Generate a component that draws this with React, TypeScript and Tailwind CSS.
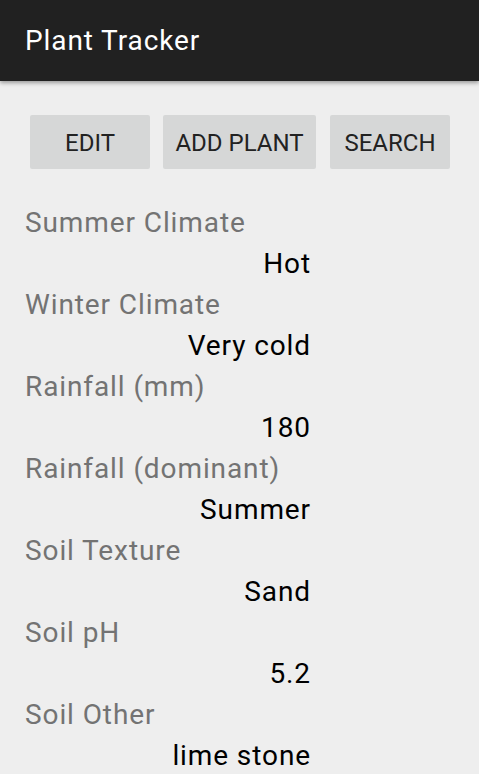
import React from "react";

const rows: { label: string; value: string }[] = [
  { label: "Summer Climate", value: "Hot" },
  { label: "Winter Climate", value: "Very cold" },
  { label: "Rainfall (mm)", value: "180" },
  { label: "Rainfall (dominant)", value: "Summer" },
  { label: "Soil Texture", value: "Sand" },
  { label: "Soil pH", value: "5.2" },
  { label: "Soil Other", value: "lime stone" },
];

export default function App() {
  return (
    <div className="w-[479px] h-[774px] overflow-hidden bg-[#eeeeee] font-['Roboto',sans-serif]">
      {/* action bar */}
      <div className="relative z-10 h-[81px] bg-[#212121] flex items-center pl-[25px] shadow-[0_2px_4px_rgba(0,0,0,0.35)]">
        <h1 className="text-white text-[28px] tracking-[0.9px] leading-none">Plant Tracker</h1>
      </div>

      {/* buttons */}
      <div className="mt-[34px] pl-[30px] flex">
        <button className="w-[120px] h-[54px] bg-[#d6d7d7] rounded-[2px] text-[#222222] text-[24px] pt-px">EDIT</button>
        <button className="ml-[13px] w-[153px] h-[54px] bg-[#d6d7d7] rounded-[2px] text-[#222222] text-[24px] pt-px">ADD PLANT</button>
        <button className="ml-[14px] w-[120px] h-[54px] bg-[#d6d7d7] rounded-[2px] text-[#222222] text-[24px] pt-px">SEARCH</button>
      </div>

      {/* details */}
      <div className="mt-[33px] pl-[25px] w-[311px] text-[28px] tracking-[0.9px] leading-[41px]">
        {rows.map((r) => (
          <div key={r.label}>
            <div className="text-[#737373] whitespace-nowrap">{r.label}</div>
            <div className="text-black text-right whitespace-nowrap">{r.value}</div>
          </div>
        ))}
      </div>
    </div>
  );
}
